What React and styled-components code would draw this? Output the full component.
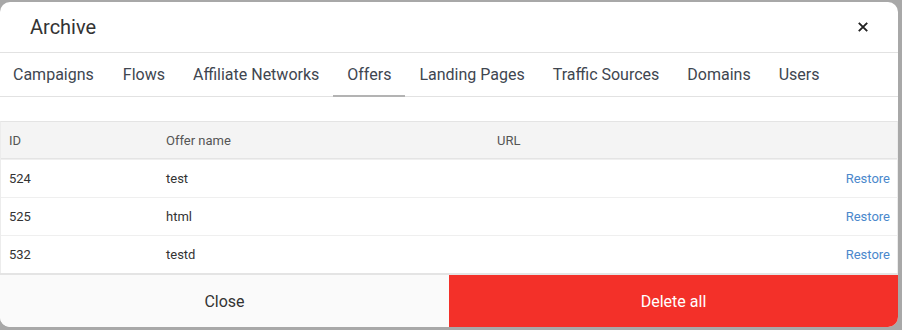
import styled, { createGlobalStyle } from "styled-components";

const GlobalStyle = createGlobalStyle`
    html, body {
        margin: 0;
        padding: 0;
        background-color: #a8a8a8;
        font-family: Roboto, "Liberation Sans", Arial, sans-serif;
    }
`

const tabs = ["Campaigns", "Flows", "Affiliate Networks", "Offers", "Landing Pages", "Traffic Sources", "Domains", "Users"];

const offers = [
    { id: 524, name: "test", url: "" },
    { id: 525, name: "html", url: "" },
    { id: 532, name: "testd", url: "" },
];

export default function App(){
    return (
        <>
            <GlobalStyle />
            <Modal>
                <Header>
                    <h1>Archive</h1>
                    <CloseIcon aria-label="close">
                        <svg width="10" height="10" viewBox="0 0 10 10">
                            <path d="M0.8 0.8 L9.2 9.2 M9.2 0.8 L0.8 9.2" stroke="#222" strokeWidth="1.9" />
                        </svg>
                    </CloseIcon>
                </Header>
                <Tabs>
                    {tabs.map((t) => (
                        <Tab key={t} active={t === "Offers"}>{t}</Tab>
                    ))}
                </Tabs>
                <Body>
                    <Table>
                        <HeadRow>
                            <Cell>ID</Cell>
                            <Cell>Offer name</Cell>
                            <Cell>URL</Cell>
                            <Cell />
                        </HeadRow>
                        {offers.map((o) => (
                            <Row key={o.id}>
                                <Cell>{o.id}</Cell>
                                <Cell>{o.name}</Cell>
                                <Cell>{o.url}</Cell>
                                <Cell><Restore>Restore</Restore></Cell>
                            </Row>
                        ))}
                    </Table>
                </Body>
                <Footer>
                    <FooterButton>Close</FooterButton>
                    <FooterButton danger>Delete all</FooterButton>
                </Footer>
            </Modal>
        </>
    );
}

const Modal = styled.div`
    margin-top: 2px;
    width: 898px;
    background-color: #FFFFFF;
    border-radius: 10px;
    overflow: hidden;
    display: flex;
    flex-direction: column;
`

const Header = styled.div`
    height: 50px;
    display: flex;
    align-items: center;
    justify-content: space-between;
    padding: 0 30px 0 30px;
    border-bottom: 1px solid #e2e2e2;
    h1{
        margin: 0;
        font-size: 20px;
        font-weight: 400;
        color: #333333;
    }
`

const CloseIcon = styled.button`
    border: none;
    background: none;
    padding: 0;
    display: flex;
    cursor: pointer;
`

const Tabs = styled.div`
    height: 43px;
    display: flex;
    border-bottom: 1px solid #e2e2e2;
`

const Tab = styled.div`
    padding: 0 14px;
    display: flex;
    align-items: center;
    font-size: 16px;
    color: #404650;
    border-bottom: 2px solid ${(p) => (p.active ? "#b3b3b3" : "transparent")};
    margin-bottom: -1px;
    box-sizing: border-box;
    &:first-child{
        padding-left: 13px;
        margin-right: 1px;
    }
`

const Body = styled.div`
    padding-top: 24px;
`

const Table = styled.div`
    border-top: 1px solid #e4e4e4;
    border-left: 1px solid #ececec;
    border-right: 1px solid #ececec;
`

const Row = styled.div`
    display: grid;
    grid-template-columns: 157px 331px 1fr 200px;
    align-items: center;
    height: 37px;
    border-top: 1px solid #efefef;
    font-size: 13px;
    color: #333333;
    &:first-of-type{
        border-top: none;
    }
`

const HeadRow = styled(Row)`
    height: 36px;
    background-color: #f4f4f4;
    border-top: none;
    border-bottom: 1px solid #e4e4e4;
    color: #555555;
`

const Cell = styled.div`
    padding-left: 8px;
    &:last-child{
        text-align: right;
        padding-right: 7px;
    }
`

const Restore = styled.span`
    color: #4a88cc;
    cursor: pointer;
`

const Footer = styled.div`
    height: 52px;
    display: flex;
    border-top: 2px solid #e4e4e4;
`

const FooterButton = styled.button`
    flex: 1;
    border: none;
    font-family: inherit;
    font-size: 16px;
    color: ${(p) => (p.danger ? "#FFFFFF" : "#333333")};
    background-color: ${(p) => (p.danger ? "#f33029" : "#fafafa")};
    cursor: pointer;
`
